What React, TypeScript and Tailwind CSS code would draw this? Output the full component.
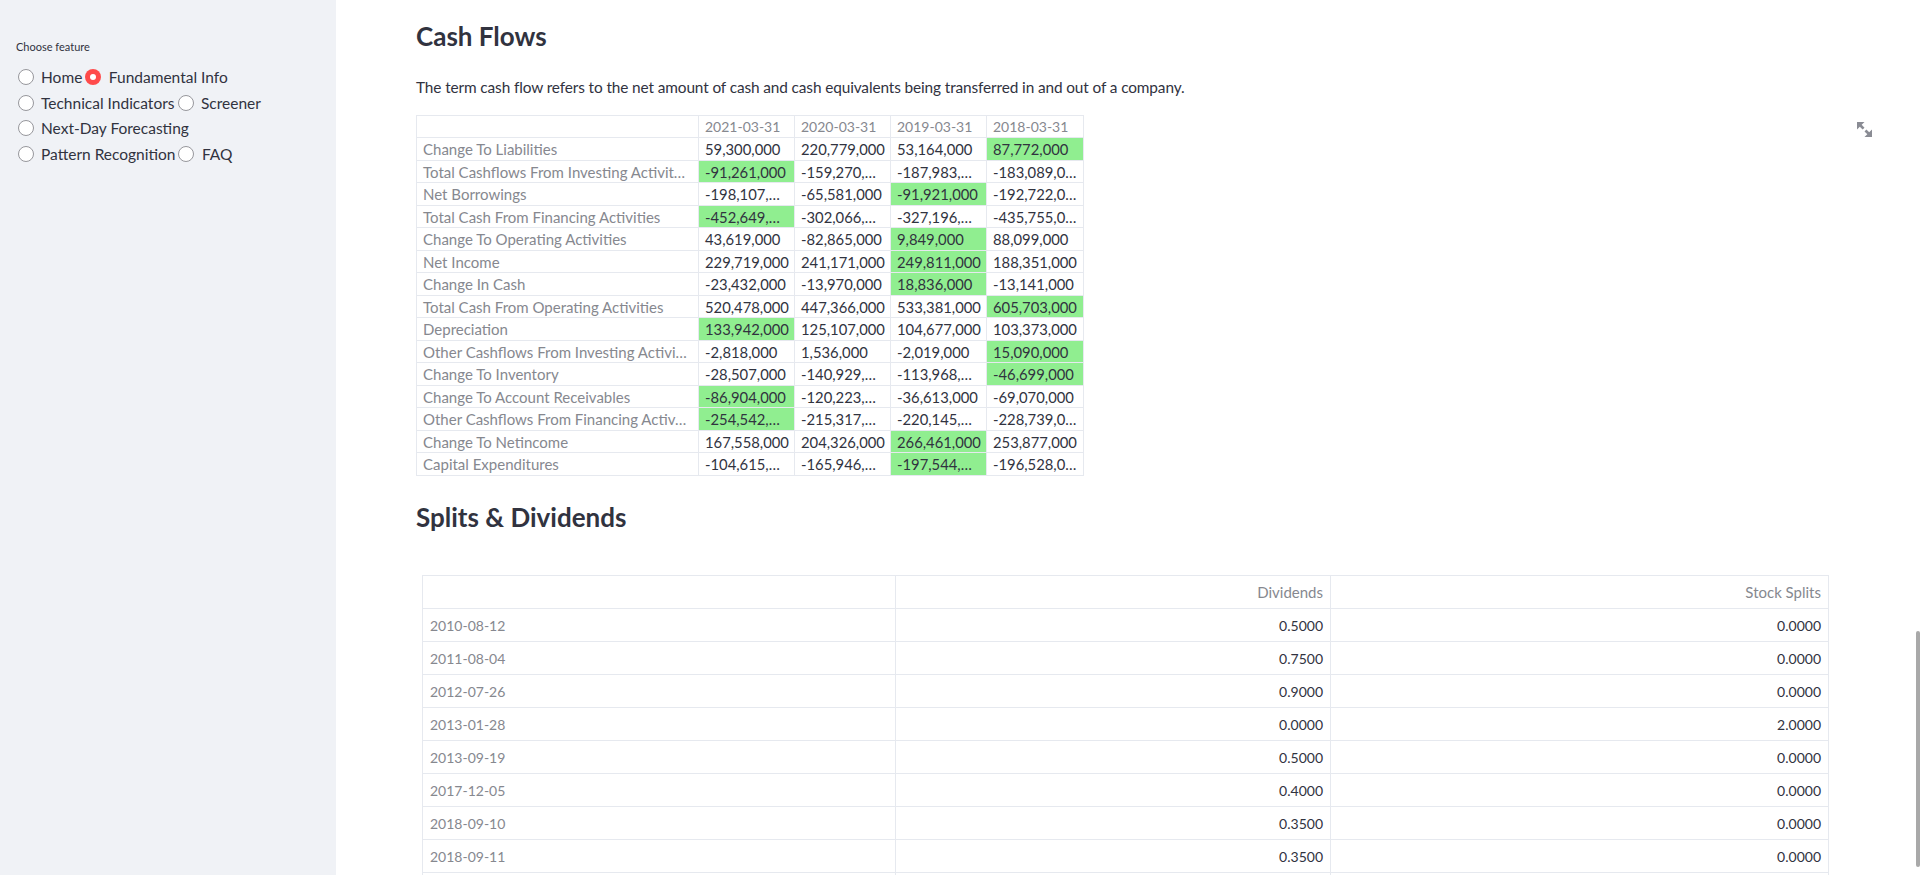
import React from "react";

type Cell = { t: string; g?: boolean };

const dates = ["2021-03-31", "2020-03-31", "2019-03-31", "2018-03-31"];

const cashRows: { label: string; cells: Cell[] }[] = [
  { label: "Change To Liabilities", cells: [{ t: "59,300,000" }, { t: "220,779,000" }, { t: "53,164,000" }, { t: "87,772,000", g: true }] },
  { label: "Total Cashflows From Investing Activit…", cells: [{ t: "-91,261,000", g: true }, { t: "-159,270,…" }, { t: "-187,983,…" }, { t: "-183,089,0…" }] },
  { label: "Net Borrowings", cells: [{ t: "-198,107,…" }, { t: "-65,581,000" }, { t: "-91,921,000", g: true }, { t: "-192,722,0…" }] },
  { label: "Total Cash From Financing Activities", cells: [{ t: "-452,649,…", g: true }, { t: "-302,066,…" }, { t: "-327,196,…" }, { t: "-435,755,0…" }] },
  { label: "Change To Operating Activities", cells: [{ t: "43,619,000" }, { t: "-82,865,000" }, { t: "9,849,000", g: true }, { t: "88,099,000" }] },
  { label: "Net Income", cells: [{ t: "229,719,000" }, { t: "241,171,000" }, { t: "249,811,000", g: true }, { t: "188,351,000" }] },
  { label: "Change In Cash", cells: [{ t: "-23,432,000" }, { t: "-13,970,000" }, { t: "18,836,000", g: true }, { t: "-13,141,000" }] },
  { label: "Total Cash From Operating Activities", cells: [{ t: "520,478,000" }, { t: "447,366,000" }, { t: "533,381,000" }, { t: "605,703,000", g: true }] },
  { label: "Depreciation", cells: [{ t: "133,942,000", g: true }, { t: "125,107,000" }, { t: "104,677,000" }, { t: "103,373,000" }] },
  { label: "Other Cashflows From Investing Activi…", cells: [{ t: "-2,818,000" }, { t: "1,536,000" }, { t: "-2,019,000" }, { t: "15,090,000", g: true }] },
  { label: "Change To Inventory", cells: [{ t: "-28,507,000" }, { t: "-140,929,…" }, { t: "-113,968,…" }, { t: "-46,699,000", g: true }] },
  { label: "Change To Account Receivables", cells: [{ t: "-86,904,000", g: true }, { t: "-120,223,…" }, { t: "-36,613,000" }, { t: "-69,070,000" }] },
  { label: "Other Cashflows From Financing Activ…", cells: [{ t: "-254,542,…", g: true }, { t: "-215,317,…" }, { t: "-220,145,…" }, { t: "-228,739,0…" }] },
  { label: "Change To Netincome", cells: [{ t: "167,558,000" }, { t: "204,326,000" }, { t: "266,461,000", g: true }, { t: "253,877,000" }] },
  { label: "Capital Expenditures", cells: [{ t: "-104,615,…" }, { t: "-165,946,…" }, { t: "-197,544,…", g: true }, { t: "-196,528,0…" }] },
];

const splits: [string, string, string][] = [
  ["2010-08-12", "0.5000", "0.0000"],
  ["2011-08-04", "0.7500", "0.0000"],
  ["2012-07-26", "0.9000", "0.0000"],
  ["2013-01-28", "0.0000", "2.0000"],
  ["2013-09-19", "0.5000", "0.0000"],
  ["2017-12-05", "0.4000", "0.0000"],
  ["2018-09-10", "0.3500", "0.0000"],
  ["2018-09-11", "0.3500", "0.0000"],
];

function Radio({ label, checked }: { label: string; checked?: boolean }) {
  return (
    <label className="flex items-center h-[25.6px] mr-[1.5px]">
      {checked ? (
        <span className="ml-[1.5px] w-4 h-4 rounded-full bg-[#ff4b4b] flex items-center justify-center shrink-0">
          <span className="w-[6px] h-[6px] rounded-full bg-white" />
        </span>
      ) : (
        <span className="ml-[1.5px] w-4 h-4 rounded-full border-[1.5px] border-[#97979c] bg-white shrink-0" />
      )}
      <span className="ml-[7.5px] text-[15.5px] leading-[24px] text-[#31333f] whitespace-nowrap">{label}</span>
    </label>
  );
}

function ExpandIcon() {
  return (
    <svg width="15" height="15" viewBox="0 0 8 8" className="fill-[#8a8c94]">
      <path d="M0 0v4l1.5-1.5 1.5 1.5 1-1-1.5-1.5 1.5-1.5h-4zm5 4l-1 1 1.5 1.5-1.5 1.5h4v-4l-1.5 1.5-1.5-1.5z" />
    </svg>
  );
}

const cellBase = "h-[22.5px] border-r border-b border-[#e6e9ef] px-[6px] leading-[22.5px] whitespace-nowrap overflow-hidden";

export default function App() {
  return (
    <div className="relative flex h-[875px] w-[1920px] overflow-hidden bg-white font-['Lato',sans-serif] text-[#31333f]">
      <aside className="w-[336px] shrink-0 bg-[#f0f2f6] px-4 pt-[38.5px]">
        <div className="text-[11px] leading-[16px] text-[#31333f]">Choose feature</div>
        <div className="mt-[10px] flex flex-wrap">
          <Radio label="Home" />
          <Radio label="Fundamental Info" checked />
          <Radio label="Technical Indicators" />
          <Radio label="Screener" />
          <Radio label="Next-Day Forecasting" />
          <Radio label="Pattern Recognition" />
          <Radio label="FAQ" />
        </div>
      </aside>

      <main className="flex-1 pl-[80px] pr-[80px]">
        <h2 className="mt-[21px] text-[26px] leading-[1.2] font-bold text-[#31333f]">Cash Flows</h2>
        <p className="mt-[23px] text-[15.4px] tracking-[-0.12px] leading-[24px] text-[#31333f]">
          The term cash flow refers to the net amount of cash and cash equivalents being transferred in and out of a company.
        </p>

        <div className="mt-[15.7px] w-fit border-l border-t border-[#e6e9ef]">
          <div className="grid grid-cols-[282px_96px_96px_96px_97px]">
            <div className={cellBase} />
            {dates.map((d) => (
              <div key={d} className={cellBase + " text-[14px] text-[#86888f]"}>
                {d}
              </div>
            ))}
            {cashRows.map((r) => (
              <React.Fragment key={r.label}>
                <div className={cellBase + " text-[15px] text-[#86888f]"}>{r.label}</div>
                {r.cells.map((c, i) => (
                  <div
                    key={i}
                    className={
                      c.g
                        ? cellBase + " bg-[#90ee90] text-[14.8px] text-[#31333f]"
                        : cellBase + " text-[14.8px] text-[#31333f]"
                    }
                  >
                    {c.t}
                  </div>
                ))}
              </React.Fragment>
            ))}
          </div>
        </div>

        <h2 className="mt-[25.8px] text-[26px] leading-[1.2] font-bold text-[#31333f]">Splits &amp; Dividends</h2>

        <div className="mt-[42.5px] ml-[6px] w-fit border-l border-t border-[#e6e9ef]">
          <div className="grid grid-cols-[473px_435px_498px]">
            <div className="h-[33px] border-r border-b border-[#e6e9ef]" />
            <div className="h-[33px] border-r border-b border-[#e6e9ef] px-[7px] flex items-center justify-end text-[15px] text-[#86888f]">Dividends</div>
            <div className="h-[33px] border-r border-b border-[#e6e9ef] px-[7px] flex items-center justify-end text-[15px] text-[#86888f]">Stock Splits</div>
            {splits.map((s) => (
              <React.Fragment key={s[0]}>
                <div className="h-[33px] border-r border-b border-[#e6e9ef] px-[7px] flex items-center text-[14px] text-[#86888f]">{s[0]}</div>
                <div className="h-[33px] border-r border-b border-[#e6e9ef] px-[7px] flex items-center justify-end text-[14px] text-[#31333f]">{s[1]}</div>
                <div className="h-[33px] border-r border-b border-[#e6e9ef] px-[7px] flex items-center justify-end text-[14px] text-[#31333f]">{s[2]}</div>
              </React.Fragment>
            ))}
            <div className="h-[33px] border-r border-b border-[#e6e9ef]" />
            <div className="h-[33px] border-r border-b border-[#e6e9ef]" />
            <div className="h-[33px] border-r border-b border-[#e6e9ef]" />
          </div>
        </div>
      </main>

      <div className="absolute left-[1857px] top-[122px]">
        <ExpandIcon />
      </div>
      <div className="absolute right-0 top-[631px] h-[236px] w-[4px] rounded-full bg-[#a9a9a9]" />
    </div>
  );
}
